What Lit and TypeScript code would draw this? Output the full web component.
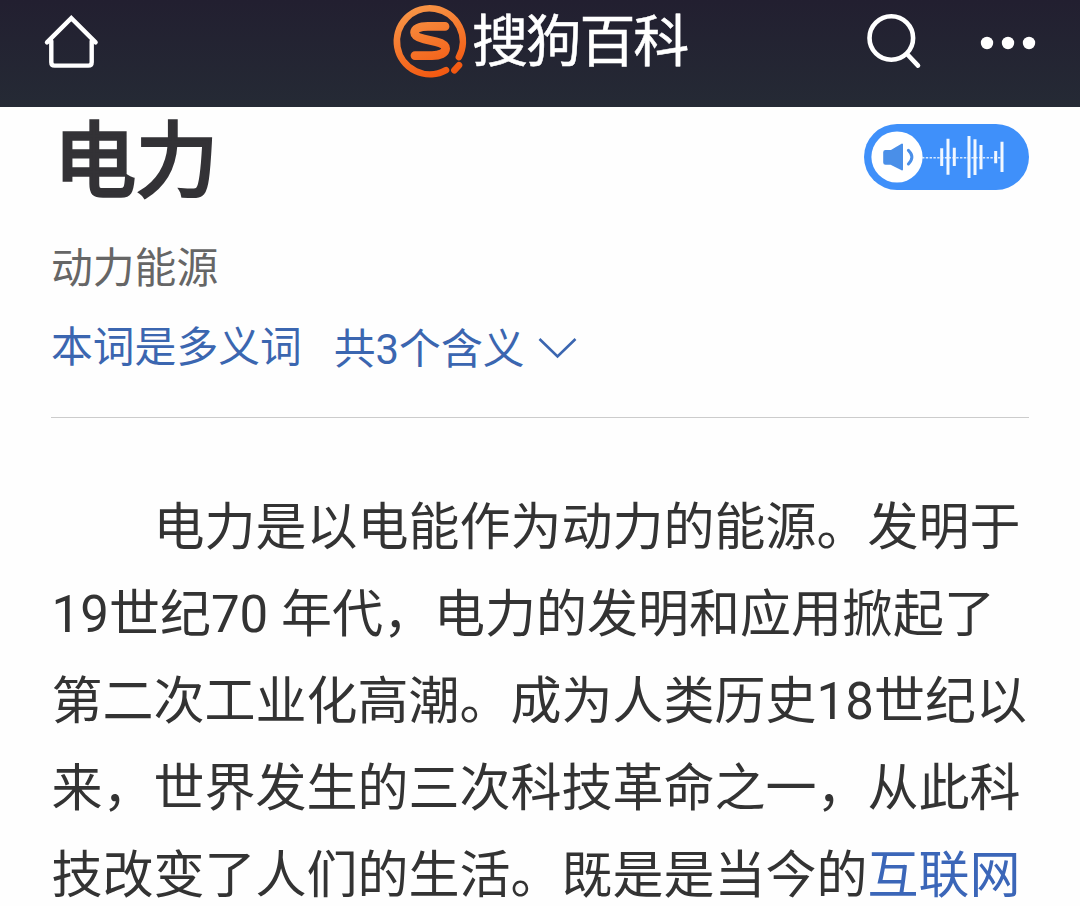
import { LitElement, html, css, svg } from "lit";
import { customElement, property } from "lit/decorators.js";

// Top navigation bar: home, brand, search and overflow menu
@customElement("baike-header")
export class BaikeHeader extends LitElement {
    static styles = css`
        :host {
            display: block;
        }
        .bar {
            display: grid;
            grid-template-columns: 1fr auto 1fr;
            align-items: start;
            box-sizing: border-box;
            height: 107px;
            padding: 0 42px;
            background: linear-gradient(#221f30, #252a35);
            color: #fff;
        }
        .home {
            margin-top: 13px;
        }
        .brand {
            display: flex;
            align-items: flex-start;
        }
        .mark {
            margin-top: 2px;
            margin-left: -3px;
        }
        .name {
            margin-left: 2px;
            font-size: 56px;
            line-height: 85px;
            letter-spacing: -2.2px;
            white-space: nowrap;
            -webkit-text-stroke: 0.5px #fff;
        }
        .actions {
            display: flex;
            justify-content: flex-end;
            gap: 58px;
            margin-top: 12px;
        }
        svg {
            display: block;
            fill: none;
            stroke-linecap: round;
            stroke-linejoin: round;
        }
    `;

    render() {
        return html`
            <header class="bar">
                <svg class="home" width="58" height="58" viewBox="0 0 58 58" stroke="#fff" stroke-width="4.4">
                    <path stroke-linejoin="miter" d="M5 29.4 L29.3 5.2 L53.6 29.4" />
                    <path d="M9.3 28 V49.2 Q9.3 52.6 12.7 52.6 H46.3 Q49.7 52.6 49.7 49.2 V28" />
                </svg>
                <div class="brand">
                    <svg class="mark" width="80" height="78" viewBox="0 0 80 78">
                        <defs>
                            <linearGradient id="flame" gradientUnits="userSpaceOnUse" x1="24" y1="0" x2="52" y2="76">
                                <stop offset="0" stop-color="#f8994a" />
                                <stop offset="1" stop-color="#f2560f" />
                            </linearGradient>
                        </defs>
                        <g stroke="url(#flame)">
                            <path stroke-width="6.6" d="M68.9 55 A33 33 0 1 0 56 68.1" />
                            <path stroke-width="6.6" d="M69 63.2 L64.4 68.2" />
                            <path stroke-width="8.8" d="M55 24.4 H38 C29 24.4 24.6 27 24.6 30.6 C24.6 34.5 29.5 36 34 37 L46 39.8 C52 41.2 55.6 43.2 55.6 46.6 C55.6 51 50 53.6 42 53.6 H25" />
                        </g>
                    </svg>
                    <span class="name">搜狗百科</span>
                </div>
                <div class="actions">
                    <svg width="58" height="58" viewBox="0 0 58 58" stroke="#fff" stroke-width="4.6">
                        <circle cx="27.3" cy="26" r="21.8" />
                        <path d="M43 42 L54 53.6" />
                    </svg>
                    <svg width="58" height="58" viewBox="0 0 58 58">
                        ${[7, 28, 49].map((x) => svg`<circle cx=${x} cy="31" r="6.2" fill="#fff" />`)}
                    </svg>
                </div>
            </header>
        `;
    }
}

// Pill button which reads the article aloud
@customElement("audio-pill")
export class AudioPill extends LitElement {
    static styles = css`
        :host {
            display: block;
        }
        .pill {
            display: block;
            width: 165px;
            height: 66px;
            border-radius: 33px;
            background: #3f90fa;
        }
    `;

    // x, top, bottom of each bar in the waveform
    bars = [
        [77.7, 24.3, 42],
        [84, 14.7, 50.7],
        [90.3, 23.7, 42],
        [105, 12, 54],
        [111, 15.3, 51],
        [117, 21, 45.3],
        [131.7, 27, 39.3],
        [138, 17.7, 48],
    ];

    render() {
        return html`
            <svg class="pill" viewBox="0 0 165 66" fill="none">
                <circle cx="33" cy="33" r="25.6" fill="#fff" />
                <path fill="#4a8fe8" stroke="#4a8fe8" stroke-width="2" stroke-linejoin="round"
                    d="M21.5 27 H27 L38 20.6 V45.4 L27 39.8 H21.5 Q20.2 39.8 20.2 38.5 V28.3 Q20.2 27 21.5 27 Z" />
                <path stroke="#4a8fe8" stroke-width="3" stroke-linecap="round" d="M44.4 26.4 Q51.4 33 44.4 40" />
                <path stroke="#d8eaff" stroke-width="1.6" stroke-dasharray="2.4 1.4" d="M58 33.7 H138" />
                ${this.bars.map(([x, y1, y2]) => svg`
                    <path stroke="#f2f8ff" stroke-width="3" d="M${x} ${y1} V${y2}" />
                `)}
            </svg>
        `;
    }
}

@customElement("app-root")
export class AppRoot extends LitElement {
    static styles = css`
        :host {
            display: block;
            height: 906px;
            overflow: hidden;
            background: #fefefe;
            color: #333;
            font-family: Roboto, "Noto Sans CJK SC", sans-serif;
        }
        .page {
            padding: 0 51px;
        }
        .head {
            display: flex;
            justify-content: space-between;
            align-items: flex-start;
            padding-top: 17px;
        }
        .title {
            margin: -15px 0 0 3px;
            font-size: 82px;
            line-height: 107px;
            font-weight: 400;
            color: #333236;
            -webkit-text-stroke: 3.4px #333236;
        }
        .subtitle {
            margin-top: 28px;
            font-size: 41.8px;
            line-height: 50px;
            color: #666;
        }
        .senses {
            display: flex;
            align-items: flex-start;
            margin-top: 28px;
            height: 95px;
            font-size: 41.8px;
            line-height: 52px;
            color: #3b66b0;
            border-bottom: 1px solid #ccc;
        }
        .count {
            display: flex;
            margin: 2px 0 0 32px;
        }
        .chevron {
            display: block;
            margin: 12px 0 0 14px;
        }
        .summary {
            margin: 66px -20px 0 0.6px;
            font-size: 51px;
            line-height: 87px;
            text-indent: 102px;
            white-space: nowrap;
        }
        .row {
            display: block;
        }
        .row + .row {
            text-indent: 0;
        }
        .link {
            color: #3b66b8;
            text-decoration: none;
        }
    `;

    @property({ type: String }) word = "电力";

    render() {
        return html`
            <baike-header></baike-header>
            <main class="page">
                <div class="head">
                    <h1 class="title">${this.word}</h1>
                    <audio-pill></audio-pill>
                </div>
                <div class="subtitle">动力能源</div>
                <div class="senses">
                    <span>本词是多义词</span>
                    <span class="count">
                        共3个含义
                        <svg class="chevron" width="40" height="26" viewBox="0 0 40 26" fill="none" stroke="#3b66b0" stroke-width="2.6">
                            <path d="M1.5 3 L19.5 20.5 L37.5 3" />
                        </svg>
                    </span>
                </div>
                <div class="summary">
                    <span class="row">电力是以电能作为动力的能源。发明于</span>
                    <span class="row">19世纪70 年代，电力的发明和应用掀起了</span>
                    <span class="row">第二次工业化高潮。成为人类历史18世纪以</span>
                    <span class="row">来，世界发生的三次科技革命之一，从此科</span>
                    <span class="row">技改变了人们的生活。既是是当今的<a class="link">互联网</a></span>
                </div>
            </main>
        `;
    }
}
